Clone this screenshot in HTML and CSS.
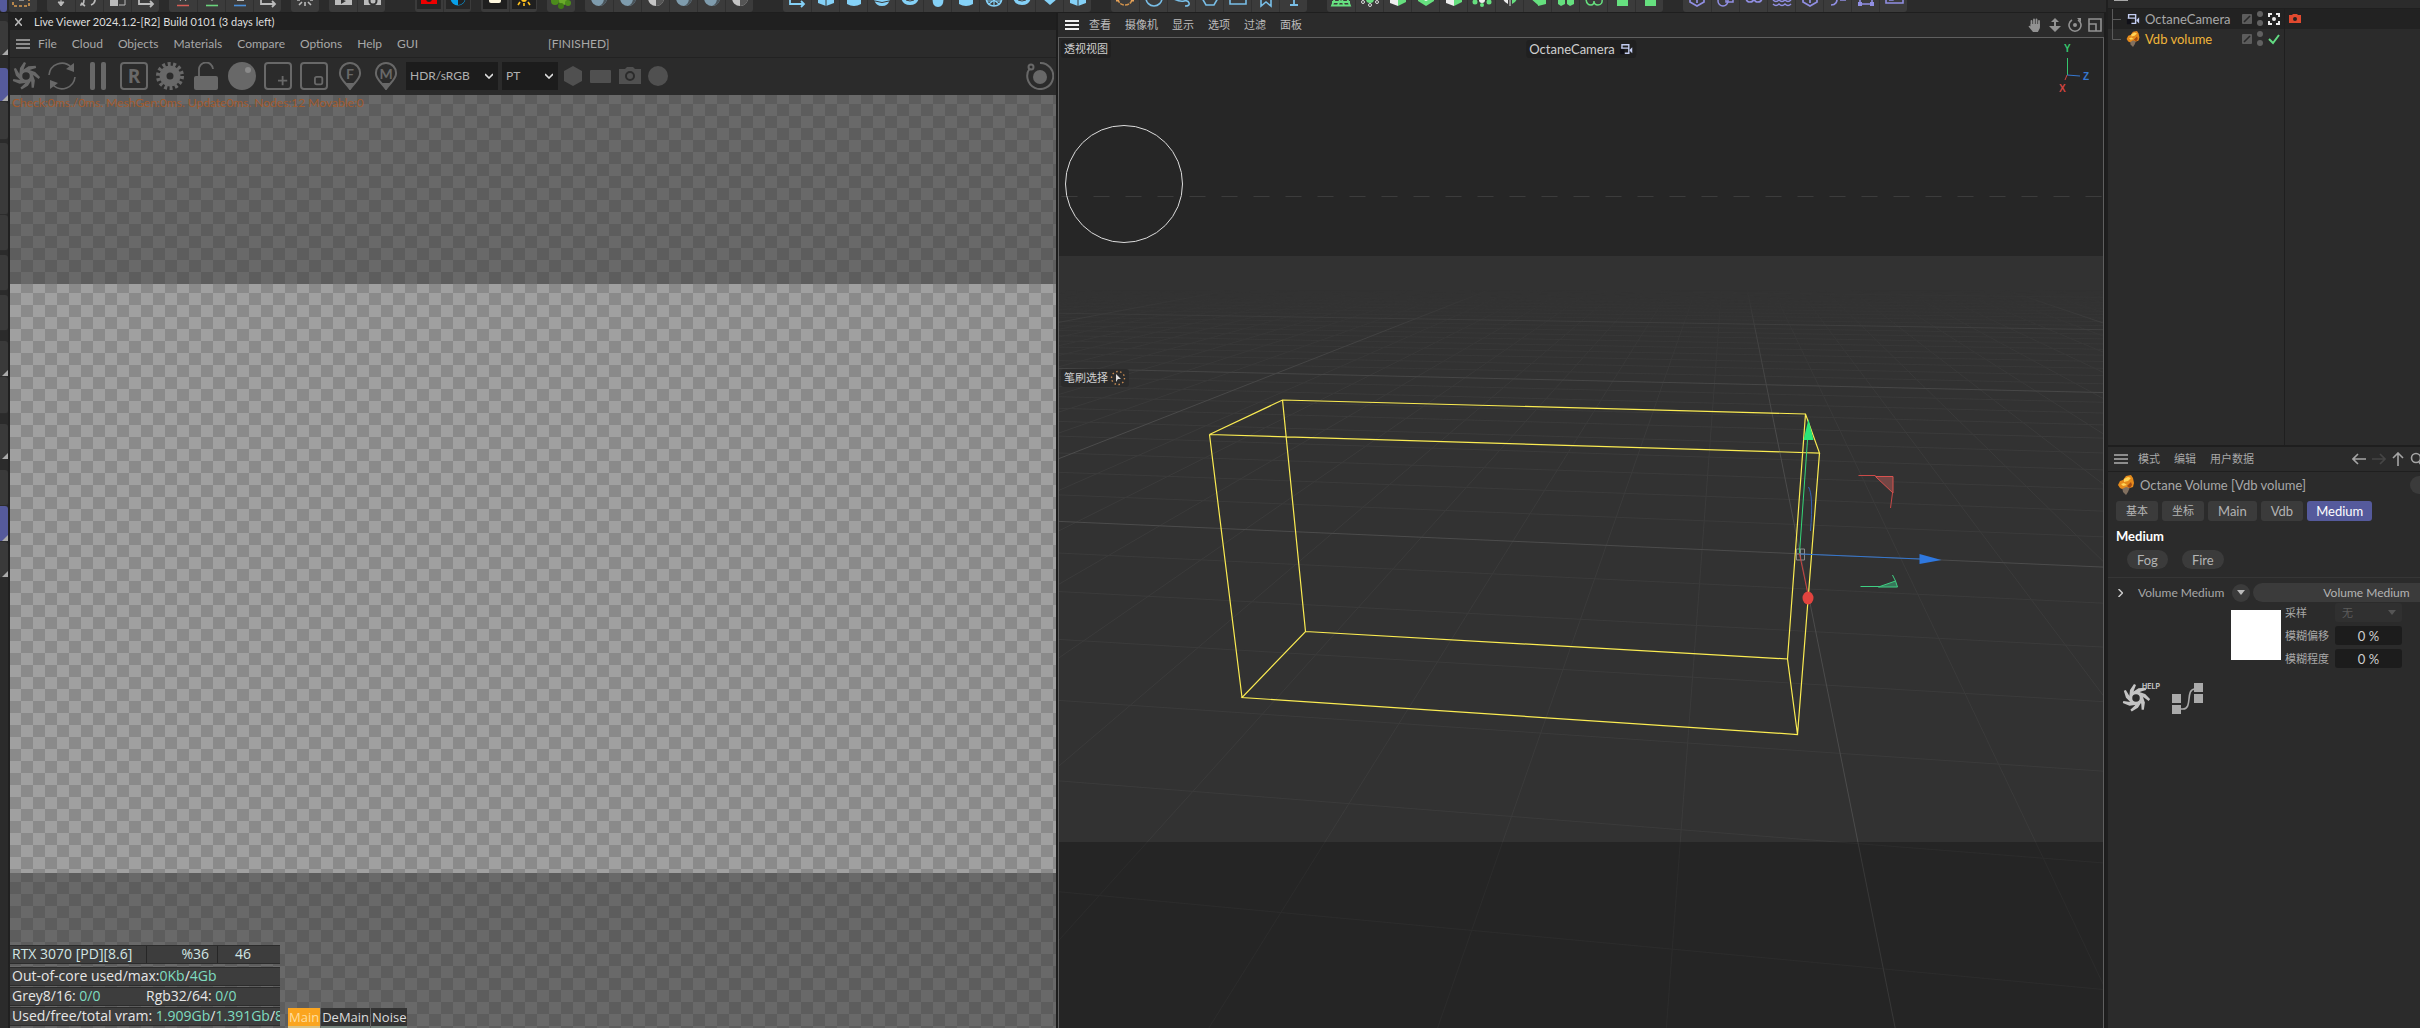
FILE: index.html
```html
<!DOCTYPE html>
<html lang="zh-CN">
<head>
<meta charset="utf-8">
<title>Live Viewer</title>
<link rel="stylesheet" href="styles.css">
</head>
<body>
<svg class="defs" aria-hidden="true">
  <symbol id="swirl" viewBox="-14 -14 28 28">
    <g fill="currentColor">
      <path id="b" d="M-7 1 -6 -8 -2 -14 0 -13 -2 -8 -3 -4Z"/>
      <use href="#b" transform="rotate(51.4)"/><use href="#b" transform="rotate(102.8)"/><use href="#b" transform="rotate(154.3)"/>
      <use href="#b" transform="rotate(205.7)"/><use href="#b" transform="rotate(257.1)"/><use href="#b" transform="rotate(308.6)"/>
    </g>
    <circle r="5" fill="#2b2b2b" stroke="currentColor" stroke-width="2.500"/>
  </symbol>
  <symbol id="cam" viewBox="0 0 16 14">
    <path d="M3 6V2h8v4M2 6h9v6H6" fill="none" stroke="#c3cdf2" stroke-width="1.600"/><path d="M12 8l3-3v7l-3-3z" fill="#c3cdf2"/><path d="M1 7h5v6H1z" fill="#101018"/>
  </symbol>
  <symbol id="volume" viewBox="0 0 16 20">
    <path d="M4 12h8l-2 5-2 3-3-3z" fill="#82705f"/><path d="M0 10l2-4 3-1 3-4 5-1 2 3 1 5-1 4-3 1-4-1-4 2-2-1z" fill="#e58a1c"/><path d="M6 4l4-2 3 1-3 3-4 1zM3 9l3-1 3 2-4 1z" fill="#ffd557"/><path d="M9 11l4-4 1 3-2 3z" fill="#a34a12"/>
  </symbol>
  <symbol id="edit" viewBox="0 0 10 10"><rect width="10" height="10" rx="1" fill="#5c5c5c"/><path d="M2 8l6-6" stroke="#292929" stroke-width="1.6"/></symbol>
  <symbol id="dots" viewBox="0 0 6 16"><circle cx="3" cy="3" r="3" fill="#616161"/><circle cx="3" cy="12" r="3" fill="#616161"/></symbol>
  <symbol id="burger" viewBox="0 0 14 10"><path d="M0 1h14M0 5h14M0 9h14" stroke="currentColor" stroke-width="2"/></symbol>
</svg>

<div class="app">
  <div class="work">
    <header class="topbar" id="topbar"></header>
    <div class="body">
      <aside class="strip" id="strip"></aside>

      <section class="live">
        <div class="titlebar">
          <button class="plain" aria-label="Close"><svg width="7" height="8" viewBox="0 0 7 8"><path d="M0 0l7 8M7 0L0 8" stroke="#b5b5b5" stroke-width="1.5"/></svg></button>
          <span>Live Viewer 2024.1.2-[R2] Build 0101 (3 days left)</span>
        </div>
        <nav class="menu">
          <button class="plain dim" aria-label="Menu"><svg width="14" height="10"><use href="#burger"/></svg></button>
          <button class="plain">File</button><button class="plain">Cloud</button><button class="plain">Objects</button><button class="plain">Materials</button><button class="plain">Compare</button><button class="plain">Options</button><button class="plain">Help</button><button class="plain">GUI</button>
          <span class="state">[FINISHED]</span>
        </nav>
        <div class="tools">
          <button class="tool" aria-label="Restart"><svg viewBox="0 0 28 28"><use href="#swirl" width="28" height="28"/></svg></button>
          <button class="tool" aria-label="Refresh"><svg viewBox="0 0 28 28"><path d="M1 13A13 13 0 0 1 23 5M27 15A13 13 0 0 1 5 23" fill="none" stroke="currentColor" stroke-width="1.6"/><path d="M26 1v9l-8-3zM2 27v-9l8 3z" fill="currentColor"/></svg></button>
          <button class="tool" aria-label="Pause"><svg viewBox="0 0 28 28"><rect x="6" width="5" height="28" rx="2" fill="currentColor"/><rect x="17" width="5" height="28" rx="2" fill="currentColor"/></svg></button>
          <button class="tool boxed letter">R</button>
          <button class="tool" aria-label="Settings"><svg viewBox="0 0 28 28"><circle cx="14" cy="14" r="7" fill="none" stroke="currentColor" stroke-width="7"/><circle cx="14" cy="14" r="12" fill="none" stroke="currentColor" stroke-width="4" stroke-dasharray="3 2.385"/></svg></button>
          <button class="tool" aria-label="Lock"><svg viewBox="0 0 28 28"><rect x="2" y="14" width="24" height="14" rx="2" fill="currentColor"/><path d="M7 14V8a7 7 0 0 1 14-1" fill="none" stroke="currentColor" stroke-width="1.8"/></svg></button>
          <button class="tool" aria-label="Clay mode"><svg viewBox="0 0 28 28"><circle cx="14" cy="14" r="14" fill="currentColor"/><circle cx="20" cy="8" r="3" fill="#8a8a8a"/></svg></button>
          <button class="tool boxed" aria-label="Add region"><svg viewBox="0 0 26 26"><path d="M18 13v10M13 18h10" stroke="currentColor" stroke-width="2"/></svg></button>
          <button class="tool boxed" aria-label="Film region"><svg viewBox="0 0 26 26"><rect x="14" y="14" width="8" height="8" rx="2" fill="none" stroke="currentColor" stroke-width="2"/></svg></button>
          <button class="tool pin"><svg viewBox="0 0 28 28"><path d="M14 1a10 10 0 0 1 10 11c0 5-6 9-10 15C10 21 4 17 4 12A10 10 0 0 1 14 1z" fill="none" stroke="currentColor" stroke-width="2"/><path d="M9 21l5 7 5-7z" fill="currentColor"/></svg><span>F</span></button>
          <button class="tool pin"><svg viewBox="0 0 28 28"><path d="M14 1a10 10 0 0 1 10 11c0 5-6 9-10 15C10 21 4 17 4 12A10 10 0 0 1 14 1z" fill="none" stroke="currentColor" stroke-width="2"/><path d="M9 21l5 7 5-7z" fill="currentColor"/></svg><span>M</span></button>
          <div class="drops">
            <select class="drop wide" aria-label="Color space"><option>HDR/sRGB</option></select>
            <select class="drop" aria-label="Kernel"><option>PT</option></select>
          </div>
          <div class="shapes">
            <svg width="20" height="20"><path d="M10 0l9 5v10l-9 5-9-5V5z" fill="currentColor"/></svg>
            <svg width="22" height="20"><rect y="4" width="21" height="13" rx="1" fill="currentColor"/></svg>
            <svg width="22" height="20"><path d="M0 3h6l2-2h6l2 2h6v15H0z" fill="currentColor"/><circle cx="11" cy="10" r="4" fill="none" stroke="#2b2b2b" stroke-width="2"/></svg>
            <svg width="20" height="20"><circle cx="10" cy="10" r="10" fill="currentColor"/></svg>
          </div>
          <button class="tool last" aria-label="Sync"><svg viewBox="0 0 28 28"><path d="M14 1A13 13 0 1 1 4 6" fill="none" stroke="currentColor" stroke-width="2"/><circle cx="14" cy="15" r="7" fill="currentColor"/><circle cx="5" cy="5" r="2.5" fill="none" stroke="currentColor" stroke-width="2"/></svg></button>
        </div>
        <div class="render">
          <div class="band shade"><p class="check">Check:0ms./0ms. MeshGen:0ms. Update0ms. Nodes:12 Movable:0</p></div>
          <div class="band lit"></div>
          <div class="band shade low">
            <div class="stats">
              <div class="row gpu"><span>RTX 3070 [PD][8.6]</span><span>%36</span><span>46</span></div>
              <div class="row">Out-of-core used/max:<b>0Kb</b>/<b>4Gb</b></div>
              <div class="row pair"><span>Grey8/16: <b>0/0</b></span><span>Rgb32/64: <b>0/0</b></span></div>
              <div class="row">Used/free/total vram: <b>1.909Gb</b>/<b>1.391Gb</b>/<b>8G</b></div>
            </div>
            <div class="passes"><button class="pass on">Main</button><button class="pass">DeMain</button><button class="pass">Noise</button></div>
          </div>
        </div>
      </section>

      <section class="view">
        <nav class="viewmenu">
          <button class="plain bright" aria-label="Menu"><svg width="14" height="10"><use href="#burger"/></svg></button>
          <button class="plain">查看</button><button class="plain">摄像机</button><button class="plain">显示</button><button class="plain">选项</button><button class="plain">过滤</button><button class="plain">面板</button>
          <span class="navicons">
            <button class="plain" aria-label="Pan"><svg width="14" height="14"><path d="M3.500 8V3M6 7V1.500M8.500 7V1.500M11 8V3" stroke="#929292" stroke-width="1.800" stroke-linecap="round"/><path d="M2.600 6h9.300v4l-2 4H5L.500 8.500q1-1.500 2.100 0z" fill="#929292"/></svg></button>
            <button class="plain" aria-label="Dolly"><svg width="14" height="14"><path d="M7 0l4 4H8v4h5l-6 6-6-6h5V4H3z" fill="#929292"/></svg></button>
            <button class="plain" aria-label="Orbit"><svg width="14" height="14"><path d="M4 2a6 6 0 1 0 6 0" fill="none" stroke="#929292" stroke-width="1.6"/><circle cx="7" cy="7" r="2" fill="#929292"/><path d="M9 0h4v4z" fill="#929292"/></svg></button>
            <button class="plain" aria-label="Toggle view"><svg width="14" height="14"><path d="M1 1h12v12H1zM1 6h7v7" fill="none" stroke="#929292" stroke-width="1.6"/></svg></button>
          </span>
        </nav>
        <div class="canvas">
          <svg class="scene" viewBox="1059 38 1045 990" preserveAspectRatio="xMidYMid slice">
            <defs>
              <linearGradient id="fade" gradientUnits="userSpaceOnUse" x1="0" y1="290" x2="0" y2="430"><stop offset="0" stop-color="#000"/><stop offset=".3" stop-color="#999"/><stop offset="1" stop-color="#fff"/></linearGradient>
              <mask id="haze" maskUnits="userSpaceOnUse" x="0" y="0" width="2420" height="1400"><rect width="2420" height="1400" fill="url(#fade)"/></mask>
            </defs>
            <rect x="500" y="-500" width="2200" height="2200" fill="#323232"/>
            <g mask="url(#haze)"><path id="minor" fill="none" stroke="#3b3b3b"/><path id="major" fill="none" stroke="#4c4c4c"/></g>
            <rect x="500" y="-500" width="2200" height="756" fill="#262626"/>
            <rect x="500" y="842" width="2200" height="900" fill="#000" fill-opacity=".25"/>
            <path d="M1062 196.500H2104" stroke="#3c3c3c" stroke-dasharray="16 16"/>
            <circle cx="1124.500" cy="184" r="58.500" fill="none" stroke="#ddd"/>
            <path d="M1283 400 1806 414 1820 453 1210 434.500ZM1306 631.500 1788 659 1798 734.500 1242.500 697.500ZM1283 400 1306 631.500M1806 414 1788 659M1820 453 1798 734.500M1210 434.500 1242.500 697.500" fill="none" stroke="#fbec52" stroke-width="1.200"/>
            <path d="M1797 549h8v11h-8zM1801 549v11M1797 554h8" fill="none" stroke="#8a8a8a"/>
            <path d="M1800 553 1808 440" stroke="#35d878"/><path d="M1809 419l5 21h-10z" fill="#2be778"/>
            <path d="M1801 554l120 5" stroke="#3577cf" stroke-width="1.200"/><path d="M1920 554l22 6-22 4z" fill="#2f78df"/>
            <path d="M1809 487q5 8 2 44" fill="none" stroke="#3464b5"/>
            <path d="M1800 554l8 38" stroke="#c94341"/><ellipse cx="1808.500" cy="598" rx="5.500" ry="6.500" fill="#e3443f"/>
            <path d="M1859 475.500h17M1893 493l-2 15" stroke="#c94a48"/><path d="M1876 476.500h17.500v16.500z" fill="#744645" stroke="#d9524f"/>
            <path d="M1861 586.500h19M1896 581l-3-6" stroke="#3fcf83"/><path d="M1879 587l17-6 2 6z" fill="#37775a" stroke="#3fcf83"/>
          </svg>
          <span class="tag persp">透视视图</span>
          <span class="tag camera">OctaneCamera <svg width="14" height="12"><use href="#cam"/></svg></span>
          <span class="tag brush">笔刷选择 <svg width="16" height="16"><circle cx="8" cy="8" r="6.500" fill="none" stroke="#c58a52" stroke-width="1.400" stroke-dasharray="1.500 2.500"/><path d="M6 4l5 5-3 0-2 3z" fill="#ddd"/></svg></span>
          <svg class="axes" width="34" height="54" viewBox="0 0 34 54">
            <path d="M12.500 15v17" stroke="#35c66d"/><path d="M12 32l13 1" stroke="#3577cf"/><path d="M12 32l-2 5" stroke="#d04440"/>
            <text x="9" y="9" fill="#35c66d">Y</text><text x="28" y="37" fill="#3577cf">Z</text><text x="4" y="49" fill="#d04440">X</text>
          </svg>
        </div>
      </section>
    </div>
  </div>

  <aside class="side">
    <section class="objects">
      <nav class="cutmenu"><button class="plain" aria-label="Menu"><svg width="14" height="10"><use href="#burger"/></svg></button><button class="plain">文件</button><button class="plain">编辑</button><button class="plain">查看</button><button class="plain">对象</button><button class="plain">标签</button><button class="plain">书签</button></nav>
      <div class="tree">
        <div class="names">
          <div class="obj sel"><svg class="branch" width="10" height="20"><path d="M.5 0v20M0 10.500h9" stroke="#5a5a5a"/></svg><svg width="14" height="14"><use href="#cam"/></svg><span>OctaneCamera</span>
            <svg width="10" height="10"><use href="#edit"/></svg><svg width="6" height="16"><use href="#dots"/></svg>
            <svg width="12" height="12"><path d="M1 4V1h3M8 1h3v3M11 8v3H8M4 11H1V8" fill="none" stroke="#eee" stroke-width="2"/><circle cx="6" cy="6" r="2" fill="#eee"/></svg></div>
          <div class="obj vdb"><svg class="branch" width="10" height="20"><path d="M.5 0v10.500H9" fill="none" stroke="#5a5a5a"/></svg><svg width="14" height="16"><use href="#volume"/></svg><span>Vdb volume</span>
            <svg width="10" height="10"><use href="#edit"/></svg><svg width="6" height="16"><use href="#dots"/></svg>
            <svg width="12" height="12"><path d="M1 6l4 4 6-8" fill="none" stroke="#63dc83" stroke-width="2"/></svg></div>
        </div>
        <div class="tags"><div class="obj sel"><svg width="12" height="12"><path d="M0 2h3l1-1h4l1 1h3v8H0z" fill="#e0492f"/><circle cx="6" cy="6" r="2" fill="#222"/></svg></div></div>
      </div>
    </section>

    <section class="attrs">
      <nav class="attrmenu">
        <button class="plain dim" aria-label="Menu"><svg width="14" height="10"><use href="#burger"/></svg></button>
        <button class="plain">模式</button><button class="plain">编辑</button><button class="plain">用户数据</button>
        <span class="history">
          <button class="plain" aria-label="Back"><svg width="14" height="12"><path d="M14 6H1M6 1L1 6l5 5" fill="none" stroke="#a5a5a5" stroke-width="1.600"/></svg></button>
          <button class="plain" aria-label="Forward"><svg width="14" height="12"><path d="M0 6h13M8 1l5 5-5 5" fill="none" stroke="#454545" stroke-width="1.600"/></svg></button>
          <button class="plain" aria-label="Up"><svg width="12" height="14"><path d="M6 14V1M1 6l5-5 5 5" fill="none" stroke="#a5a5a5" stroke-width="1.600"/></svg></button>
          <button class="plain" aria-label="Search"><svg width="12" height="14"><circle cx="6" cy="6" r="4.500" fill="none" stroke="#a5a5a5" stroke-width="1.600"/><path d="M9 10l3 4" stroke="#a5a5a5" stroke-width="1.600"/></svg></button>
        </span>
      </nav>
      <div class="heading"><svg width="16" height="20"><use href="#volume"/></svg><span>Octane Volume [Vdb volume]</span><i class="knob"></i></div>
      <div class="tabs"><button class="tab">基本</button><button class="tab">坐标</button><button class="tab">Main</button><button class="tab">Vdb</button><button class="tab on">Medium</button></div>
      <h2>Medium</h2>
      <div class="pills"><button class="pill">Fog</button><button class="pill">Fire</button></div>
      <div class="medium">
        <button class="plain" aria-label="Expand"><svg width="5" height="8"><path d="M.5 0l4 4-4 4" fill="none" stroke="#ccc" stroke-width="1.500"/></svg></button>
        <span class="mlabel">Volume Medium</span>
        <button class="round" aria-label="Choose"><svg width="8" height="5"><path d="M0 0h8L4 5z" fill="#bbb"/></svg></button>
        <button class="linkfield">Volume Medium</button>
      </div>
      <div class="preview">
        <div class="swatch"></div>
        <div class="fields">
          <label for="samp">采样</label><select id="samp" disabled><option>无</option></select>
          <label for="off">模糊偏移</label><input id="off" value="0 %">
          <label for="amt">模糊程度</label><input id="amt" value="0 %">
        </div>
      </div>
      <div class="footer">
        <button class="plain help"><svg width="28" height="30" viewBox="0 0 28 30"><use href="#swirl" y="1" width="28" height="28"/></svg><span>HELP</span></button>
        <button class="plain" aria-label="Node editor"><svg width="32" height="32"><path d="M9 26h2c10 0 2-20 12-20" fill="none" stroke="#aaa" stroke-width="1.600"/><path d="M0 11h9v9H0zM0 22h9v9H0zM22 0h9v9h-9zM22 11h9v9h-9z" fill="#aaa"/></svg></button>
      </div>
    </section>
  </aside>
</div>
<script src="app.js"></script>
</body>
</html>
```
FILE: styles.css
```css
* { box-sizing: border-box; }
body { margin: 0; background: #2b2b2b; color: #a8a8a8; font: 13px/16px Lato, "Noto Sans CJK SC", sans-serif; }
button, select, input { font: inherit; color: inherit; border: 0; margin: 0; padding: 0; background: none; border-radius: 0; }
svg { display: block; flex: none; }
.defs { position: absolute; width: 0; height: 0; }
.plain { display: block; white-space: nowrap; }
.dim { color: #8d8d8d; }
.bright { color: #f2f2f2; }

.app { display: flex; height: 100vh; overflow: hidden; }
.work { flex: 1; min-width: 0; display: flex; flex-direction: column; }
.body { flex: 1; min-height: 0; display: flex; }

/* main tool bar */
.topbar { display: flex; height: 13px; border-bottom: 1px solid #1e1e1e; overflow: hidden; }
.group { display: flex; height: 12px; background: #3b3b3b; border-radius: 0 0 3px 3px; overflow: hidden; flex: none; }
.group.edge { background: #555a9c; width: 7px; }
.cell { width: 28px; height: 12px; border-left: 1px solid #303030; }
.cell:first-child { border-left: 0; }
.cell svg { margin: 0 auto; }

/* left palette */
.strip { width: 10px; border-right: 2px solid #202020; display: flex; flex-direction: column; overflow: hidden; }
.slot { flex: none; display: flex; align-items: flex-end; justify-content: flex-end; background: #3a3a3a; border-radius: 0 3px 3px 0; border-bottom: 1px solid #2d2d2d; }
.slot.on { background: #555a9c; }
.slot.more::after { content: ""; border: 3px solid transparent; border-right-color: #aaa; border-bottom-color: #aaa; }

/* live viewer */
.live { flex: 1; min-width: 0; display: flex; flex-direction: column; border-right: 2px solid #1d1d1d; }
.titlebar { display: flex; align-items: center; gap: 12px; height: 17px; padding-left: 5px; background: #202020; color: #dedede; font-size: 11px; }
.menu { display: flex; align-items: center; gap: 15px; height: 28px; padding-left: 6px; border-bottom: 1px solid #222; font-size: 12px; }
.menu .dim { margin-right: -7px; }
.state { margin-left: 115px; }
.tools { display: flex; align-items: center; gap: 8px; height: 37px; padding: 0 2px 2px; color: #686868; flex: none; }
.tool { width: 28px; height: 28px; flex: none; position: relative; }
.tool svg { width: 100%; height: 100%; }
.boxed { border: 2px solid; border-radius: 4px; }
.letter { font: bold 19px/24px "Open Sans", sans-serif; }
.pin span { position: absolute; left: 0; right: 0; top: 4px; font-weight: bold; font-size: 14px; }
.last { margin-left: auto; }
.drops { display: flex; gap: 4px; margin-left: -2px; color: #b0b0b0; }
.drop { appearance: none; width: 56px; height: 28px; padding-left: 4px; background: #1c1c1c url("data:image/svg+xml,%3Csvg xmlns='http://www.w3.org/2000/svg' width='8' height='6'%3E%3Cpath d='M0 1l4 4 4-4' fill='none' stroke='%23ddd' stroke-width='1.6'/%3E%3C/svg%3E") no-repeat right 5px center; font-size: 12px; }
.drop.wide { width: 92px; }
.shapes { display: flex; gap: 7px; color: #505050; margin-left: -3px; }

.render { flex: 1; min-height: 0; display: flex; flex-direction: column; }
.band { background: repeating-conic-gradient(var(--a) 0 25%, var(--b) 0 50%) -1px 9px / 24px 24px; }
.shade { --a: #696969; --b: #5d5d5d; flex: 189; }
.lit { --a: #a0a0a0; --b: #8a8a8a; flex: 589; }
.low { flex: 155; display: flex; align-items: flex-end; gap: 8px; min-height: 0; }
.check { margin: 0; padding-left: 2px; color: #a25a2c; white-space: nowrap; font-size: 12px; }
.stats { width: 270px; font: 14px/18px "Open Sans", sans-serif; color: #e6e6e6; padding-bottom: 2px; }
.row { height: 19px; padding-left: 2px; background: #3d3d3d; border-top: 1px solid #2c2c2c; border-bottom: 1px solid #2c2c2c; margin-top: 1px; white-space: nowrap; overflow: hidden; line-height: 16px; }
.row b { font-weight: normal; color: #7fdcc0; }
.gpu { display: grid; grid-template-columns: 134px 71px 1fr; margin-bottom: 3px; color: #d2e6e4; }
.gpu span + span { border-left: 1px solid #262626; text-align: right; padding-right: 8px; }
.gpu span:last-child { text-align: left; padding-left: 17px; }
.pair { display: grid; grid-template-columns: 134px 1fr; }
.passes { display: flex; gap: 1px; font: 13px/17px "Open Sans", sans-serif; }
.pass { height: 20px; padding: 0 1px; background: #333; color: #ddd; border-bottom: 2px solid #77857f; }
.pass.on { background: #fba51f; color: #ffdf9e; border-color: #d8c48a; }

/* perspective view */
.view { flex: 1; min-width: 0; display: flex; flex-direction: column; border-right: 2px solid #1d1d1d; }
.viewmenu { display: flex; align-items: center; gap: 14px; height: 24px; padding-left: 7px; font-size: 11px; color: #bdbdbd; }
.viewmenu .bright { margin-right: -4px; }
.navicons { display: flex; gap: 6px; margin-left: auto; padding-right: 2px; }
.canvas { position: relative; flex: 1; min-height: 0; overflow: hidden; border: 1px solid #5f5f5f; border-bottom: 0; }
.scene { width: 100%; height: 100%; }
.tag { position: absolute; display: flex; align-items: center; gap: 4px; height: 18px; padding: 0 3px; background: #202020; border-radius: 3px; color: #d0d0d0; font-size: 11px; }
.persp { left: 2px; top: 2px; }
.camera { left: 50%; top: 2px; transform: translateX(-50%); font-size: 13px; }
.brush { left: 2px; top: 331px; gap: 2px; background: #2b2b2b; }
.axes { position: absolute; right: 14px; top: 5px; font: bold 10px "Liberation Sans", sans-serif; }

/* side panels */
.side { width: 314px; flex: none; display: flex; flex-direction: column; border-left: 2px solid #1f1f1f; overflow: hidden; }
.objects { height: 447px; display: flex; flex-direction: column; border-bottom: 2px solid #1e1e1e; flex: none; }
.cutmenu { display: flex; align-items: flex-end; gap: 17px; height: 9px; padding: 0 6px 7px; overflow: hidden; border-bottom: 1px solid #1f1f1f; font-size: 11px; flex: none; }
.tree { flex: 1; display: flex; }
.names { width: 177px; border-right: 1px solid #1f1f1f; }
.tags { flex: 1; }
.tags .sel { width: 100%; background: none; }
.obj { display: flex; align-items: center; gap: 5px; height: 20px; padding-left: 4px; }
.obj.sel { background: #222; }
.obj span { width: 92px; color: #a8a8a8; }
.obj .branch { margin: 0 -1px 0 0; }
.obj.vdb span { color: #f0b53a; }

.attrmenu { display: flex; align-items: center; gap: 14px; height: 25px; padding-left: 6px; border-bottom: 1px solid #1f1f1f; font-size: 11px; }
.attrmenu .dim { margin-right: -4px; }
.history { display: flex; align-items: center; gap: 6px; margin-left: auto; margin-right: -2px; }
.heading { display: flex; align-items: center; gap: 6px; height: 26px; padding-left: 10px; }
.knob { width: 18px; height: 18px; border-radius: 9px; background: #3b3b3b; margin: 0 -8px 0 auto; }
.tabs { display: flex; gap: 4px; padding: 3px 8px 0; }
.tab { height: 20px; padding: 0 10px; border-radius: 3px; background: #3b3b3b; color: #b3b3b3; }
.tab:nth-child(-n+2) { font-size: 11px; }
.tab.on { background: #555a9c; color: #fff; padding: 0 9px; }
h2 { margin: 7px 8px 6px; font: inherit; font-weight: bold; color: #fff; }
.pills { display: flex; gap: 14px; padding: 0 19px 8px; margin: 0 0 5px; border-bottom: 1px solid #363636; }
.pill { height: 19px; padding: 0 10px; border-radius: 10px; background: #3b3b3b; color: #b3b3b3; }
.medium { display: flex; align-items: center; padding-left: 10px; font-size: 12px; }
.mlabel { width: 94px; margin-left: 15px; }
.round { display: grid; place-items: center; width: 18px; height: 18px; border-radius: 9px; background: #3b3b3b; }
.linkfield { flex: 1; height: 19px; margin: 0 -60px 0 3px; border-radius: 10px; background: #3b3b3b; color: #b3b3b3; }
.preview { display: flex; gap: 4px; padding: 1px 0 0 123px; }
.swatch { width: 50px; height: 50px; margin-top: 7px; background: #fff; flex: none; }
.fields { display: grid; grid-template-columns: 50px 67px; grid-auto-rows: 19px; row-gap: 4px; align-items: center; font-size: 11px; }
.fields input { width: 67px; height: 19px; background: #1c1c1c; border-radius: 3px; text-align: center; color: #d0d0d0; font-size: 13px; }
.fields select { appearance: none; width: 67px; height: 19px; padding-left: 7px; border-radius: 3px; opacity: 1; color: #5c5c5c; background: #303030 url("data:image/svg+xml,%3Csvg xmlns='http://www.w3.org/2000/svg' width='8' height='5'%3E%3Cpath d='M0 0h8L4 5z' fill='%23555'/%3E%3C/svg%3E") no-repeat right 6px center; }
.footer { display: flex; gap: 12px; padding: 15px 14px; color: #c4c4c4; }
.help { display: flex; align-items: flex-start; color: #c4c4c4; }
.help svg { margin-right: -8px; }
.help span { font: bold 7px/8px Inter, sans-serif; }
```
FILE: app.js
```javascript
// Main tool bar: each group is [gap before it, colour, icon names]
const glyphs = {
  dash: '<path d="M4-6h16V6H4z" fill="none" stroke="#d69a52" stroke-width="1.600" stroke-dasharray="3 2"/><path d="M10 0h5" stroke="#ddd"/>',
  move: '<path d="M14-8V4M11 2l3 4 3-4z" fill="currentColor" stroke="currentColor"/>',
  turn: '<path d="M5 3l4 3M8 0q0 5-4 5M19-3q1 6-4 8" fill="none" stroke="currentColor" stroke-width="1.600"/>',
  scale: '<path d="M6-6h8V6H6z" fill="currentColor"/><path d="M15-3h6v8h-6" fill="none" stroke="currentColor"/>',
  axis: '<path d="M7-4V4h14M18 1l3 3-3 3" fill="none" stroke="currentColor" stroke-width="1.800"/>',
  ax: '<path d="M8 5.500h12" stroke="#d65c55" stroke-width="1.600"/><path d="M11 1l2-3M17 1l-2-3" stroke="currentColor"/>',
  ay: '<path d="M8 5.500h12" stroke="#6bd47d" stroke-width="1.600"/><path d="M14-3v4" stroke="currentColor"/>',
  az: '<path d="M8 5.500h12" stroke="#4b8fd9" stroke-width="1.600"/><path d="M11 .500h7" stroke="currentColor"/>',
  snap: '<path d="M14 6V2M8 5l3-3M20 5l-3-3M6 0h3M19 0h3" stroke="currentColor" stroke-width="1.600"/>',
  clap: '<path d="M6-6h17V5H6z" fill="currentColor"/><path d="M12-1v5l5-3z" fill="#333"/>',
  gear: '<path d="M6-6h17V5H6z" fill="currentColor"/><circle cx="15" cy="1" r="3.500" fill="none" stroke="#333" stroke-width="2"/>',
  red: '<path d="M2-4h24V9H2z" fill="#262626"/><path d="M6-6h16V4H6z" fill="#ef0000"/><circle cx="14" cy="-1" r="3" fill="#222"/>',
  blue: '<path d="M2-4h24V9H2z" fill="#262626"/><circle cx="14" cy="-2" r="7.500" fill="#08a0e8"/><path d="M14-6v11a7 7 0 0 0 7-7z" fill="#222"/>',
  lamp: '<path d="M2-4h24V9H2z" fill="#1f1f1f"/><rect x="8" y="-6" width="12" height="9" rx="2" fill="#fff8df"/>',
  sun: '<path d="M2-4h24V9H2z" fill="#1f1f1f"/><path d="M14 3v3M10 2L8 5M18 2l2 3M6-1h3M19-1h3" stroke="#ffc21e" stroke-width="1.600"/><circle cx="14" cy="-1" r="3" fill="#ffc21e"/>',
  leaf: '<circle cx="8" cy="1" r="4" fill="#4c8c1c"/><circle cx="16" cy="1" r="4" fill="#6aab2a"/><circle cx="14" cy="6" r="3" fill="#3f7a16"/><circle cx="21" cy="3" r="3" fill="#4c8c1c"/>',
  ball: '<circle cx="14" cy="-2" r="8" fill="currentColor"/><path d="M14 6a8 8 0 0 0 8-8h-3q0 6-5 8z" fill="#4a545a"/>',
  moon: '<circle cx="14" cy="-2" r="8" fill="#c4c4c4"/><path d="M14 6a8 8 0 0 0 8-8h-8z" fill="#555"/>',
  cube: '<path d="M6-4l8 3 8-3v7l-8 3-8-3z" fill="currentColor"/><path d="M14-1v7" stroke="#3b3b3b"/>',
  cyl: '<path d="M7-4h14v8q-7 4-14 0z" fill="currentColor"/>',
  disk: '<path d="M6-4h16q0 10-8 10T6-4z" fill="currentColor"/><path d="M7 1q7 3 14 0" fill="none" stroke="#3b3b3b"/>',
  torus: '<path d="M5-3q1 8 9 8t9-8z" fill="currentColor"/><path d="M10 0q4 2 8 0" fill="none" stroke="#3b3b3b"/>',
  caps: '<path d="M9-5h10q2 12-5 12T9-5z" fill="currentColor"/>',
  net: '<path d="M6-4h16q0 10-8 10T6-4z" fill="none" stroke="currentColor" stroke-width="1.600"/><path d="M14-4V6M6 1h16M9 4l10-8M19 4L9-4" stroke="currentColor" stroke-width="1.200"/>',
  dia: '<path d="M7-1h14l-7 6z" fill="currentColor"/>',
  arc: '<path d="M7-1q1 6 7 6t7-6" fill="none" stroke="#d0924c" stroke-width="1.600" stroke-dasharray="4 1"/><path d="M5 0h3M20 0h3" stroke="#e8a35b" stroke-width="3"/>',
  ring: '<circle cx="14" cy="-2" r="8" fill="none" stroke="currentColor" stroke-width="1.600"/>',
  wave: '<path d="M6-1q6 3 10 2t5 2-4 3" fill="none" stroke="currentColor" stroke-width="1.600"/>',
  poly: '<path d="M6-2l4 7h8l4-7" fill="none" stroke="currentColor" stroke-width="1.600"/>',
  rect: '<path d="M6-5h16v9H6z" fill="none" stroke="currentColor" stroke-width="1.600"/>',
  star: '<path d="M9-4v10l5-4 5 4V-4" fill="none" stroke="currentColor" stroke-width="1.600"/>',
  text: '<path d="M14-4v9M10 5h8" stroke="currentColor" stroke-width="1.800"/>',
  tri: '<path d="M9-4L5 5.500h18L19-4M5 2h18M11 5l3-8 3 8" fill="none" stroke="currentColor" stroke-width="1.800"/>',
  nodes: '<circle cx="14" cy="-1" r="4" fill="currentColor"/><g fill="none" stroke="#ddd"><circle cx="7" cy="2" r="1.500"/><circle cx="14" cy="5" r="1.500"/><circle cx="21" cy="2" r="1.500"/></g>',
  half: '<path d="M6-5h8V6L6 3z" fill="#eee"/><path d="M14-4h8v6l-8 4z" fill="currentColor"/>',
  layer: '<path d="M6-1l8-4 8 4v2l-8 5-8-5z" fill="currentColor"/><path d="M8-2h12l-6 3z" fill="#fff"/>',
  dots: '<circle cx="14" cy="0" r="3" fill="#eee"/><g fill="currentColor"><circle cx="7" cy="2" r="2.500"/><circle cx="21" cy="2" r="2.500"/><circle cx="14" cy="5" r="2"/></g>',
  mirror: '<path d="M12-5v9q-5-2-5-7z" fill="#eee"/><path d="M16-5v9q5-2 5-7z" fill="currentColor"/><path d="M14-6V6" stroke="#ddd"/>',
  box: '<path d="M6-2l8 7V-6zM14-6h8v10l-8 2z" fill="currentColor"/>',
  twin: '<path d="M6-5h7v9l-4 2-3-2zM15-5h7v9l-4 2-3-2z" fill="currentColor"/>',
  loop: '<path d="M6-2q0 7 5 7 3 0 3-4 0 4 4 4 5 0 4-7" fill="none" stroke="currentColor" stroke-width="1.500"/>',
  sq: '<path d="M9-6h11V6H9z" fill="currentColor"/>',
  gem: '<path d="M7-3v5l7 4 7-4v-5M14-4v7" fill="none" stroke="currentColor" stroke-width="1.700"/>',
  chain: '<circle cx="11" cy="1" r="5" fill="none" stroke="currentColor" stroke-width="1.500"/><path d="M14-4v6h7v-6" fill="none" stroke="currentColor" stroke-width="1.500"/>',
  eyes: '<path d="M6-3q0 5 4 5t4-5q0 5 4 5t4-5" fill="none" stroke="currentColor" stroke-width="1.700"/>',
  sea: '<path d="M5 0q3 3 6 0 3 3 6 0 3 3 6 0M5 4q3 3 6 0 3 3 6 0 3 3 6 0" fill="none" stroke="currentColor" stroke-width="1.500"/>',
  bend: '<path d="M7 5q7 0 6-9M16 0h6" fill="none" stroke="currentColor" stroke-width="1.700"/>',
  frame: '<path d="M8-4v8h12v-8" fill="none" stroke="currentColor" stroke-width="1.600"/><path d="M6 2h4v4H6zM18 2h4v4h-4z" fill="currentColor"/>',
  card: '<path d="M6-5h17v8H6zM9 0h4l2-3" fill="none" stroke="currentColor" stroke-width="1.600"/>'
};
const groups = [
  [2, '#ccc', 'dash'], [10, '#bbb', 'move turn scale axis'], [10, '#bbb', 'ax ay az axis'], [10, '#bbb', 'snap'],
  [10, '#bbb', 'clap gear'], [30, '#bbb', 'red blue'], [10, '#bbb', 'lamp sun'], [10, '#bbb', 'leaf'],
  [10, '#7f9cad', 'ball ball moon ball ball moon'],
  [30, '#85d1f7', 'axis cube cyl disk torus caps cyl net torus dia cube'],
  [20, '#79bfe8', 'arc ring wave poly rect star text'],
  [20, '#66e07f', 'tri nodes half layer half dots mirror box twin loop sq sq'],
  [20, '#918fe3', 'gem chain eyes sea gem bend frame card']
];
document.getElementById('topbar').innerHTML = '<div class="group edge"></div>' + groups.map(([gap, color, names]) =>
  `<div class="group" style="margin-left:${gap}px;color:${color}">` + names.split(' ').map(n =>
    `<button class="cell" aria-label="${n}"><svg width="28" height="12">${glyphs[n]}</svg></button>`).join('') + '</div>').join('');

// Left palette: [gap before, height, classes]
const slots = [[8, 35, 'more'], [12, 34, 'on more'], [0, 38, ''], [3, 72, ''], [0, 36, ''], [4, 36, ''], [4, 36, ''], [10, 36, 'more'],
  [0, 37, ''], [10, 36, 'more'], [10, 36, ''], [0, 36, 'on more'], [0, 36, 'more']];
document.getElementById('strip').innerHTML = slots.map(([gap, h, c]) =>
  `<button class="slot ${c}" aria-label="tool" style="margin-top:${gap}px;height:${h}px"></button>`).join('');

// Ground grid seen in perspective: both line families run to points on the horizon
const horizon = 196;
let minor = '', major = '';
const add = (n, d) => { if (n % 10 === 0) major += d; else minor += d; };
for (let v = -40; v <= 9; v++) {
  const y = x => (horizon + 0.4929 * (x + 6380) / (11.27 - v)).toFixed(1);
  add(v, `M1000 ${y(1000)}L2200 ${y(2200)}`);
}
for (let u = -40; u <= 40; u++) {
  const s = 0.2003 + 0.275 * u;
  add(u, `M${(1729 + s * 60).toFixed(1)} 256L${(1729 + s * 904).toFixed(1)} 1100`);
}
document.getElementById('minor').setAttribute('d', minor);
document.getElementById('major').setAttribute('d', major);
```
